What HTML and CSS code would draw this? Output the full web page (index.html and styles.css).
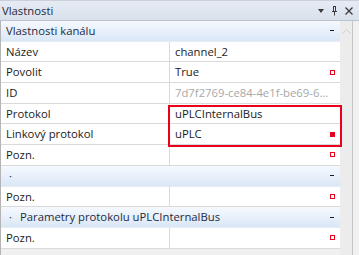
FILE: index.html
```html
<!DOCTYPE html>
<html lang="cs">
<head>
    <meta charset="UTF-8">
    <title>Vlastnosti</title>
    <link rel="stylesheet" href="styles.css">
</head>
<body>
    <div class="panel">
        <div class="titlebar">
            <span class="title">Vlastnosti</span>
            <div class="tools">
                <svg width="6" height="4" viewBox="0 0 6 4"><path d="M0 0h6L3 4z" fill="#3c3c3c"/></svg>
                <svg width="5" height="10" viewBox="0 0 5 10"><path d="M1 0.5h3M1.5 0.5v5M3.5 0.5v5M0 5.5h5M2.5 5.5v4" stroke="#3c3c3c" fill="none"/></svg>
                <svg width="8" height="8" viewBox="0 0 8 8"><path d="M0.5 0.5l7 7M7.5 0.5l-7 7" stroke="#3c3c3c" stroke-width="1.3" fill="none"/></svg>
            </div>
        </div>
        <div class="body">
            <div class="grid">
                <div class="cat"><span class="cat-text">Vlastnosti kanálu</span><span class="collapse"></span></div>
                <div class="row"><div class="name">Název</div><div class="value">channel_2</div></div>
                <div class="row"><div class="name">Povolit</div><div class="value">True<span class="mark"></span></div></div>
                <div class="row"><div class="name">ID</div><div class="value muted">7d7f2769-ce84-4e1f-be69-6...</div></div>
                <div class="row"><div class="name">Protokol</div><div class="value">uPLCInternalBus</div></div>
                <div class="row"><div class="name">Linkový protokol</div><div class="value">uPLC<span class="mark filled"></span></div></div>
                <div class="row"><div class="name">Pozn.</div><div class="value"><span class="mark"></span></div></div>
                <div class="cat"><span class="dot">·</span><span class="collapse"></span></div>
                <div class="row"><div class="name">Pozn.</div><div class="value"><span class="mark"></span></div></div>
                <div class="cat"><span class="dot">·</span><span class="cat-text">Parametry protokolu uPLCInternalBus</span><span class="collapse"></span></div>
                <div class="row"><div class="name">Pozn.</div><div class="value"><span class="mark"></span></div></div>
            </div>
            <div class="scrollbar">
                <svg width="9" height="5" viewBox="0 0 9 5"><path d="M0.5 4.5l4-4 4 4" stroke="#d0d0d0" fill="none"/></svg>
            </div>
        </div>
        <div class="highlight"></div>
    </div>
</body>
</html>
```

FILE: styles.css
```css
*{
    box-sizing: border-box;
}

body{
    margin: 0;
    background-color: #f0f0f0;
    font-family: "Open Sans", "Noto Sans", sans-serif;
    font-size: 11.3px;
    color: #1b1b1b;
}

.panel{
    position: relative;
    width: 359px;
    height: 255px;
    overflow: hidden;
}

.titlebar{
    height: 21px;
    display: flex;
    align-items: center;
    justify-content: space-between;
    padding: 0 6px 0 2px;
    background: linear-gradient(#e6ebf3, #d9e1ec);
    border-top: 1px solid #c9d0da;
    border-bottom: 1px solid #b9c3d0;
    color: #1e2a3c;
}

.tools{
    display: flex;
    align-items: center;
    gap: 8px;
}

.body{
    display: flex;
    height: 234px;
}

.grid{
    width: 340px;
    border-left: 1px solid #b4b4b4;
}

.row, .cat{
    display: flex;
    height: 20.7px;
    line-height: 19.7px;
    border-bottom: 1px solid #dadada;
}

.cat{
    background: linear-gradient(#f5f9fe, #dae7f7);
    border-bottom-color: #e6ecf3;
    color: #1e2a3c;
    padding-left: 5px;
    align-items: center;
}

.cat-text{
    flex: 1;
}

.dot{
    width: 14px;
    padding-left: 3px;
    flex: none;
}

.collapse{
    width: 4px;
    height: 1px;
    background-color: #1b1b1b;
    margin-right: 6px;
    margin-left: auto;
}

.row{
    background-color: white;
}

.name{
    width: 169px;
    padding-left: 5px;
    border-right: 1px solid #dadada;
    white-space: nowrap;
}

.value{
    flex: 1;
    display: flex;
    align-items: center;
    padding-left: 5px;
    white-space: nowrap;
    overflow: hidden;
}

.muted{
    color: #a8a8a8;
}

.mark{
    width: 5px;
    height: 5px;
    border: 1px solid #e8001c;
    margin-left: auto;
    margin-right: 5px;
}

.mark.filled{
    background-color: #e8001c;
}

.scrollbar{
    width: 13px;
    background-color: #ececec;
    border-right: 1px solid #c4c4c4;
    display: flex;
    justify-content: center;
    padding-top: 8px;
}

.highlight{
    position: absolute;
    left: 168px;
    top: 105px;
    width: 174px;
    height: 42px;
    border: 2px solid #e8001c;
}
```
